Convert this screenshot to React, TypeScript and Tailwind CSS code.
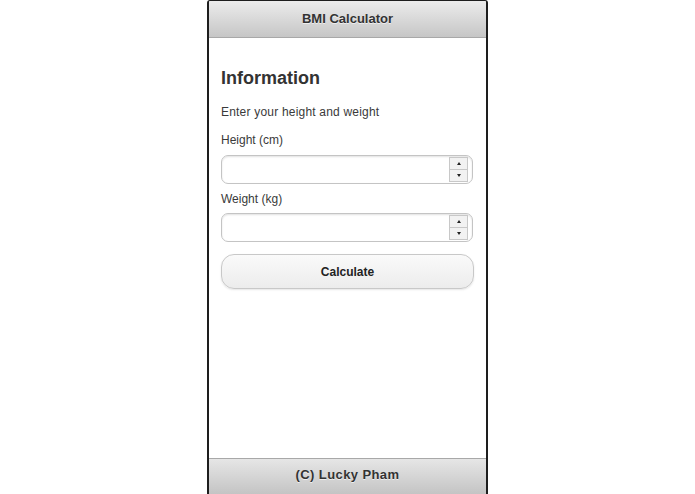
import { useState } from "react";

function NumberField({ value, onChange }: { value: string; onChange: (v: string) => void }) {
  const step = (d: number) => onChange(String((Number(value) || 0) + d));
  return (
    <div className="flex h-[29px] items-center rounded-[7px] border border-[#c4c4c4] bg-white pr-[4px] shadow-[inset_0_1px_2px_rgba(0,0,0,0.12)]">
      <input
        value={value}
        onChange={(e) => onChange(e.target.value)}
        className="h-full min-w-0 flex-1 bg-transparent px-2 text-[13px] outline-none"
      />
      <div className="flex h-[25px] w-[19px] flex-col border border-[#c8c8c8] bg-[#f2f2f2]">
        <button onClick={() => step(1)} className="flex flex-1 items-center justify-center border-b border-[#c8c8c8]">
          <span className="h-0 w-0 border-x-[2.5px] border-b-[3px] border-x-transparent border-b-[#222]" />
        </button>
        <button onClick={() => step(-1)} className="flex flex-1 items-center justify-center">
          <span className="h-0 w-0 border-x-[2.5px] border-t-[3px] border-x-transparent border-t-[#222]" />
        </button>
      </div>
    </div>
  );
}

export default function App() {
  const [height, setHeight] = useState("");
  const [weight, setWeight] = useState("");

  return (
    <div className="flex h-[494px] w-full justify-center bg-white font-['Liberation_Sans',Arial,sans-serif] text-[#333]">
      <div className="flex h-full w-[281px] flex-col overflow-hidden rounded-t-[3px] border-x-2 border-t border-[#1e1e1e] bg-white">
        <header className="flex h-[37px] shrink-0 items-center justify-center border-b border-[#a8a8a8] bg-gradient-to-b from-[#ececec] to-[#c6c6c6] text-[13px] font-bold text-[#333] [text-shadow:0_1px_0_#eee]">
          BMI Calculator
        </header>

        <main className="flex-1 px-3 pt-[29px]">
          <h2 className="text-[18px] font-bold leading-[22px] text-[#333]">Information</h2>
          <p className="mt-[16px] text-[12px] leading-[14px] tracking-[0.2px] text-[#3a3a3a]">Enter your height and weight</p>

          <label className="mt-[14px] block text-[12px] leading-[14px] text-[#3a3a3a]">Height (cm)</label>
          <div className="mt-[8px] mr-[1px]">
            <NumberField value={height} onChange={setHeight} />
          </div>

          <label className="mt-[8px] block text-[12px] leading-[14px] text-[#3a3a3a]">Weight (kg)</label>
          <div className="mt-[7px] mr-[1px]">
            <NumberField value={weight} onChange={setWeight} />
          </div>

          <button className="mt-[12px] flex h-[35px] w-full items-center justify-center rounded-[13px] border border-[#c8c8c8] bg-gradient-to-b from-[#fafafa] to-[#ececec] text-[12px] font-bold text-[#222] shadow-[0_1px_2px_rgba(0,0,0,0.1)]">
            Calculate
          </button>
        </main>

        <footer className="flex h-[36px] shrink-0 items-center justify-center border-t border-[#a8a8a8] bg-gradient-to-b from-[#e6e6e6] to-[#c4c4c4] pb-[3px] text-[13px] font-bold tracking-[0.4px] text-[#333] [text-shadow:0_1px_0_#eee]">
          (C) Lucky Pham
        </footer>
      </div>
    </div>
  );
}
